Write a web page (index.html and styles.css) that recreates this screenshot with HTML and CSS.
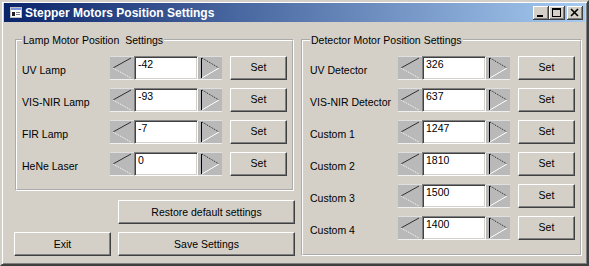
FILE: index.html
```html
<!doctype html>
<html>
<head>
    <title>Stepper Motors Position Settings</title>
    <link rel="stylesheet" href="styles.css">
</head>
<body>
    <div class="window">
        <div class="titlebar">
            <svg class="app-icon" width="12" height="11" viewBox="0 0 12 11">
                <rect x="0.5" y="0.5" width="11" height="10" fill="#ffffff" stroke="#c0c0c0"/>
                <rect x="1" y="1" width="10" height="2" fill="#7a96df"/>
                <rect x="2" y="5" width="3" height="4" fill="#202020"/>
                <rect x="6" y="5" width="4" height="1" fill="#808080"/>
                <rect x="6" y="7" width="4" height="1" fill="#808080"/>
            </svg>
            <span class="title">Stepper Motors Position Settings</span>
            <div class="controls">
                <button class="ctl">
                    <svg width="16" height="14" viewBox="0 0 16 14"><rect x="4" y="9" width="6" height="2" fill="#000"/></svg>
                </button>
                <button class="ctl">
                    <svg width="16" height="14" viewBox="0 0 16 14"><rect x="3.5" y="2.5" width="8" height="8" fill="none" stroke="#000"/><rect x="3" y="2" width="9" height="2" fill="#000"/></svg>
                </button>
                <button class="ctl ctl-close">
                    <svg width="16" height="14" viewBox="0 0 16 14"><path d="M4 3 L11 10 M11 3 L4 10" stroke="#000" stroke-width="1.6"/></svg>
                </button>
            </div>
        </div>

        <div class="client">
            <div class="col-left">
                <fieldset class="group group-lamp">
                    <legend>Lamp Motor Position&nbsp; Settings</legend>
                    <div class="rows">
                        <div class="row">
                            <span class="row-label">UV Lamp</span>
                            <button class="spin spin-left"><svg width="24" height="24" viewBox="0 0 24 24"><path d="M21 2 L3 12" stroke="#303030"/><path d="M3 12 L21 22" stroke="#ffffff" stroke-dasharray="1 1"/></svg></button>
                            <input class="field" type="text" value="-42">
                            <button class="spin spin-right"><svg width="24" height="24" viewBox="0 0 24 24"><path d="M3.5 2 L3.5 22" stroke="#000"/><path d="M4 2 L21 12" stroke="#202020" stroke-dasharray="1 1"/><path d="M4 22 L21 12" stroke="#ffffff"/></svg></button>
                            <button class="btn btn-set">Set</button>
                        </div>
                        <div class="row">
                            <span class="row-label">VIS-NIR Lamp</span>
                            <button class="spin spin-left"><svg width="24" height="24" viewBox="0 0 24 24"><path d="M21 2 L3 12" stroke="#303030"/><path d="M3 12 L21 22" stroke="#ffffff" stroke-dasharray="1 1"/></svg></button>
                            <input class="field" type="text" value="-93">
                            <button class="spin spin-right"><svg width="24" height="24" viewBox="0 0 24 24"><path d="M3.5 2 L3.5 22" stroke="#000"/><path d="M4 2 L21 12" stroke="#202020" stroke-dasharray="1 1"/><path d="M4 22 L21 12" stroke="#ffffff"/></svg></button>
                            <button class="btn btn-set">Set</button>
                        </div>
                        <div class="row">
                            <span class="row-label">FIR Lamp</span>
                            <button class="spin spin-left"><svg width="24" height="24" viewBox="0 0 24 24"><path d="M21 2 L3 12" stroke="#303030"/><path d="M3 12 L21 22" stroke="#ffffff" stroke-dasharray="1 1"/></svg></button>
                            <input class="field" type="text" value="-7">
                            <button class="spin spin-right"><svg width="24" height="24" viewBox="0 0 24 24"><path d="M3.5 2 L3.5 22" stroke="#000"/><path d="M4 2 L21 12" stroke="#202020" stroke-dasharray="1 1"/><path d="M4 22 L21 12" stroke="#ffffff"/></svg></button>
                            <button class="btn btn-set">Set</button>
                        </div>
                        <div class="row">
                            <span class="row-label">HeNe Laser</span>
                            <button class="spin spin-left"><svg width="24" height="24" viewBox="0 0 24 24"><path d="M21 2 L3 12" stroke="#303030"/><path d="M3 12 L21 22" stroke="#ffffff" stroke-dasharray="1 1"/></svg></button>
                            <input class="field" type="text" value="0">
                            <button class="spin spin-right"><svg width="24" height="24" viewBox="0 0 24 24"><path d="M3.5 2 L3.5 22" stroke="#000"/><path d="M4 2 L21 12" stroke="#202020" stroke-dasharray="1 1"/><path d="M4 22 L21 12" stroke="#ffffff"/></svg></button>
                            <button class="btn btn-set">Set</button>
                        </div>
                    </div>
                </fieldset>
                <div class="actions">
                    <button class="btn btn-restore">Restore default settings</button>
                    <div class="actions-row">
                        <button class="btn btn-exit">Exit</button>
                        <button class="btn btn-save">Save Settings</button>
                    </div>
                </div>
            </div>

            <fieldset class="group group-detector">
                <legend>Detector Motor Position Settings</legend>
                <div class="rows">
                    <div class="row">
                        <span class="row-label">UV Detector</span>
                        <button class="spin spin-left"><svg width="24" height="24" viewBox="0 0 24 24"><path d="M21 2 L3 12" stroke="#303030"/><path d="M3 12 L21 22" stroke="#ffffff" stroke-dasharray="1 1"/></svg></button>
                        <input class="field" type="text" value="326">
                        <button class="spin spin-right"><svg width="24" height="24" viewBox="0 0 24 24"><path d="M3.5 2 L3.5 22" stroke="#000"/><path d="M4 2 L21 12" stroke="#202020" stroke-dasharray="1 1"/><path d="M4 22 L21 12" stroke="#ffffff"/></svg></button>
                        <button class="btn btn-set">Set</button>
                    </div>
                    <div class="row">
                        <span class="row-label">VIS-NIR Detector</span>
                        <button class="spin spin-left"><svg width="24" height="24" viewBox="0 0 24 24"><path d="M21 2 L3 12" stroke="#303030"/><path d="M3 12 L21 22" stroke="#ffffff" stroke-dasharray="1 1"/></svg></button>
                        <input class="field" type="text" value="637">
                        <button class="spin spin-right"><svg width="24" height="24" viewBox="0 0 24 24"><path d="M3.5 2 L3.5 22" stroke="#000"/><path d="M4 2 L21 12" stroke="#202020" stroke-dasharray="1 1"/><path d="M4 22 L21 12" stroke="#ffffff"/></svg></button>
                        <button class="btn btn-set">Set</button>
                    </div>
                    <div class="row">
                        <span class="row-label">Custom 1</span>
                        <button class="spin spin-left"><svg width="24" height="24" viewBox="0 0 24 24"><path d="M21 2 L3 12" stroke="#303030"/><path d="M3 12 L21 22" stroke="#ffffff" stroke-dasharray="1 1"/></svg></button>
                        <input class="field" type="text" value="1247">
                        <button class="spin spin-right"><svg width="24" height="24" viewBox="0 0 24 24"><path d="M3.5 2 L3.5 22" stroke="#000"/><path d="M4 2 L21 12" stroke="#202020" stroke-dasharray="1 1"/><path d="M4 22 L21 12" stroke="#ffffff"/></svg></button>
                        <button class="btn btn-set">Set</button>
                    </div>
                    <div class="row">
                        <span class="row-label">Custom 2</span>
                        <button class="spin spin-left"><svg width="24" height="24" viewBox="0 0 24 24"><path d="M21 2 L3 12" stroke="#303030"/><path d="M3 12 L21 22" stroke="#ffffff" stroke-dasharray="1 1"/></svg></button>
                        <input class="field" type="text" value="1810">
                        <button class="spin spin-right"><svg width="24" height="24" viewBox="0 0 24 24"><path d="M3.5 2 L3.5 22" stroke="#000"/><path d="M4 2 L21 12" stroke="#202020" stroke-dasharray="1 1"/><path d="M4 22 L21 12" stroke="#ffffff"/></svg></button>
                        <button class="btn btn-set">Set</button>
                    </div>
                    <div class="row">
                        <span class="row-label">Custom 3</span>
                        <button class="spin spin-left"><svg width="24" height="24" viewBox="0 0 24 24"><path d="M21 2 L3 12" stroke="#303030"/><path d="M3 12 L21 22" stroke="#ffffff" stroke-dasharray="1 1"/></svg></button>
                        <input class="field" type="text" value="1500">
                        <button class="spin spin-right"><svg width="24" height="24" viewBox="0 0 24 24"><path d="M3.5 2 L3.5 22" stroke="#000"/><path d="M4 2 L21 12" stroke="#202020" stroke-dasharray="1 1"/><path d="M4 22 L21 12" stroke="#ffffff"/></svg></button>
                        <button class="btn btn-set">Set</button>
                    </div>
                    <div class="row">
                        <span class="row-label">Custom 4</span>
                        <button class="spin spin-left"><svg width="24" height="24" viewBox="0 0 24 24"><path d="M21 2 L3 12" stroke="#303030"/><path d="M3 12 L21 22" stroke="#ffffff" stroke-dasharray="1 1"/></svg></button>
                        <input class="field" type="text" value="1400">
                        <button class="spin spin-right"><svg width="24" height="24" viewBox="0 0 24 24"><path d="M3.5 2 L3.5 22" stroke="#000"/><path d="M4 2 L21 12" stroke="#202020" stroke-dasharray="1 1"/><path d="M4 22 L21 12" stroke="#ffffff"/></svg></button>
                        <button class="btn btn-set">Set</button>
                    </div>
                </div>
            </fieldset>
        </div>
    </div>
</body>
</html>
```

FILE: styles.css
```css
body {
    margin: 0;
    background-color: #d4d0c8;
    font-family: 'Liberation Sans', Arial, sans-serif;
    font-size: 10.5px;
    color: #000000;
}
.window {
    box-sizing: border-box;
    width: 589px;
    height: 266px;
    background-color: #d4d0c8;
    border: 2px solid;
    border-color: #d4d0c8 #404040 #404040 #d4d0c8;
    box-shadow: inset 1px 1px #ffffff, inset -1px -1px #808080;
    padding: 1px 2px 2px 2px;
    display: flex;
    flex-direction: column;
}
.titlebar {
    height: 19px;
    display: flex;
    align-items: center;
    padding: 0 2px 0 6px;
    background: linear-gradient(to right, #0a246a, #a6caf0);
}
.app-icon {
    display: block;
    margin-right: 3px;
}
.title {
    color: #ffffff;
    font-weight: bold;
    font-size: 12px;
}
.controls {
    margin-left: auto;
    display: flex;
}
.ctl {
    width: 16px;
    height: 14px;
    padding: 0;
    border: none;
    background-color: #d4d0c8;
    box-shadow: inset -1px -1px #404040, inset 1px 1px #ffffff, inset -2px -2px #808080;
}
.ctl svg {
    display: block;
}
.ctl-close {
    margin-left: 2px;
}
.client {
    display: flex;
    gap: 6px;
    padding: 11px 0 0 10px;
}
.col-left {
    width: 281px;
    display: flex;
    flex-direction: column;
}
.group {
    margin: 0;
    border: 2px groove #ffffff;
    padding: 9px 0 13px 5px;
    min-width: 0;
}
.group-lamp {
    margin: 0 1px;
}
.group-detector {
    width: 281px;
    box-sizing: border-box;
    padding: 9px 0 14px 7px;
}
.group legend {
    padding: 0 1px;
    line-height: 14px;
}
.rows {
    display: flex;
    flex-direction: column;
    gap: 8px;
}
.row {
    display: flex;
    align-items: center;
    height: 24px;
}
.row-label {
    width: 88px;
    padding-top: 3px;
    white-space: nowrap;
}
.spin {
    width: 24px;
    height: 24px;
    padding: 0;
    border: none;
    background-color: #b9b9b9;
    box-shadow: inset 0 -1px #f0f0f0, inset 0 1px #e0e0e0;
}
.spin svg {
    display: block;
}
.field {
    box-sizing: border-box;
    width: 64px;
    height: 24px;
    margin: 0;
    border: 1px solid;
    border-color: #808080 #ffffff #ffffff #808080;
    box-shadow: inset 1px 1px #404040, inset -1px -1px #d4d0c8;
    padding: 0 2px 8px 3px;
    font-family: 'Liberation Sans', Arial, sans-serif;
    font-size: 10.5px;
    color: #000000;
    background-color: #ffffff;
    outline: none;
}
.btn {
    box-sizing: border-box;
    height: 24px;
    padding: 0;
    border: 1px solid;
    border-color: #ffffff #404040 #404040 #ffffff;
    box-shadow: inset -1px -1px #808080;
    background-color: #d4d0c8;
    font-family: 'Liberation Sans', Arial, sans-serif;
    font-size: 10.5px;
    color: #000000;
}
.btn-set {
    width: 57px;
    margin-left: 8px;
    padding-bottom: 3px;
}
.actions {
    display: flex;
    flex-direction: column;
    align-items: flex-end;
    gap: 8px;
    margin-top: 9px;
}
.btn-restore {
    width: 177px;
}
.actions-row {
    display: flex;
    gap: 7px;
    width: 100%;
}
.btn-exit {
    width: 97px;
}
.btn-save {
    flex: 1;
}
```
